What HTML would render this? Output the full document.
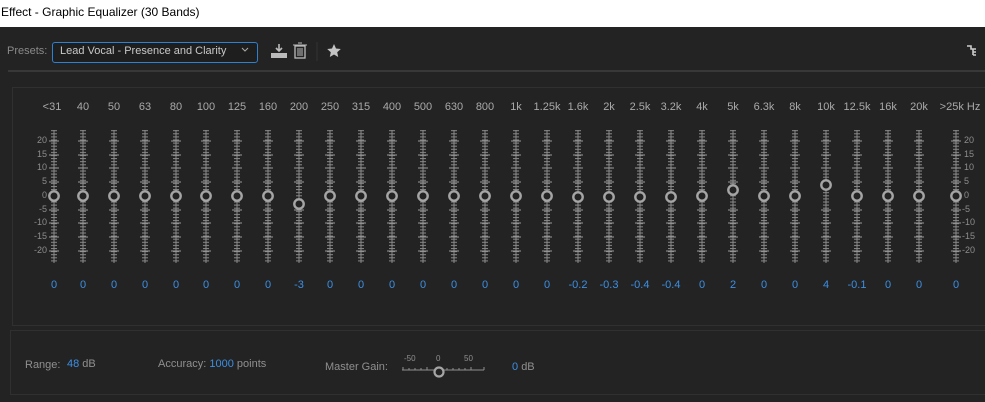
<!DOCTYPE html><html><head><style>
body{margin:0;width:985px;height:402px;background:#232323;position:relative;overflow:hidden;font-family:"Liberation Sans",sans-serif}
.a{position:absolute;white-space:nowrap}
.lb{position:absolute;top:101px;width:44px;text-align:center;font-size:11px;color:#a9a9a9}
.v{position:absolute;top:279px;width:40px;text-align:center;font-size:11px;color:#3d8fe4}
.s{position:absolute;width:30px;text-align:right;font-size:9px;color:#8d8d8d}
.s2{position:absolute;font-size:9px;color:#8d8d8d}
</style></head><body>
<div class="a" style="left:0;top:0;width:985px;height:27px;background:#fff"></div>
<div class="a" style="left:1px;top:5px;font-size:12px;color:#000">Effect - Graphic Equalizer (30 Bands)</div>
<div class="a" style="left:7px;top:45px;font-size:11px;color:#8a8a8a">Presets:</div>
<div class="a" style="left:52px;top:42px;width:204px;height:19px;border:1px solid #2f7fd2;border-radius:3px;background:#1e1e1e"></div>
<div class="a" style="left:60px;top:45px;font-size:11px;color:#c8c8c8">Lead Vocal - Presence and Clarity</div>
<svg class="a" style="left:0;top:30px" width="985" height="40">
<polyline points="242,18 245,21 248,18" fill="none" stroke="#aaa" stroke-width="1"/>
<path d="M279 14v7M276 18l3 3 3-3" stroke="#bbb" stroke-width="1.6" fill="none"/>
<path d="M271 23h16v5h-16z" fill="#bbb"/>
<rect x="295" y="16" width="10" height="12" fill="none" stroke="#bbb" stroke-width="1.3"/>
<path d="M293 15h14M298 13h4M298 18v8M300 18v8M302 18v8" stroke="#bbb" stroke-width="1"/>
<line x1="317" y1="12" x2="317" y2="31" stroke="#333"/>
<path d="M334 14l2 4.5 4.8.5-3.6 3.3 1 4.7-4.2-2.5-4.2 2.5 1-4.7-3.6-3.3 4.8-.5z" fill="#c4c4c4"/>
<path d="M967 16h4v3h2v6M973 19h3M973 22h3M973 25h3" stroke="#ccc" stroke-width="1.6" fill="none"/>
</svg>
<div class="a" style="left:8px;top:70px;width:977px;height:2px;background:#383838"></div>
<div class="a" style="left:12px;top:87px;width:980px;height:237px;border:1px solid #303030"></div>
<div class="a" style="left:10px;top:330px;width:980px;height:63px;border:1px solid #303030"></div>
<svg class="a" style="left:0;top:0" width="985" height="300">
<defs>
<pattern id="p" width="8" height="3.1" patternUnits="userSpaceOnUse"><rect x="0" y="0" width="8" height="1" fill="#8a8a8a"/></pattern>
<symbol id="t" overflow="visible"><rect x="-3" y="130" width="6" height="133" fill="url(#p)"/><rect x="-0.5" y="130" width="1" height="133" fill="#8a8a8a"/>
<path d="M-5 141h10M-5 155h10M-5 168h10M-5 182h10M-5 210h10M-5 223h10M-5 237h10M-5 251h10" stroke="#9a9a9a" stroke-width="1"/></symbol>
</defs>
<g>
<use href="#t" x="54"/><use href="#t" x="83"/><use href="#t" x="114"/><use href="#t" x="145"/><use href="#t" x="176"/><use href="#t" x="206"/><use href="#t" x="237"/><use href="#t" x="268"/><use href="#t" x="299"/><use href="#t" x="330"/><use href="#t" x="361"/><use href="#t" x="392"/><use href="#t" x="423"/><use href="#t" x="454"/><use href="#t" x="485"/><use href="#t" x="516"/><use href="#t" x="547"/><use href="#t" x="578"/><use href="#t" x="609"/><use href="#t" x="640"/><use href="#t" x="671"/><use href="#t" x="702"/><use href="#t" x="733"/><use href="#t" x="764"/><use href="#t" x="795"/><use href="#t" x="826"/><use href="#t" x="857"/><use href="#t" x="888"/><use href="#t" x="919"/><use href="#t" x="956"/>
</g>
<g fill="#232323" stroke="#a5a5a5" stroke-width="2.4">
<circle cx="54" cy="196" r="4.7"/><circle cx="83" cy="196" r="4.7"/><circle cx="114" cy="196" r="4.7"/><circle cx="145" cy="196" r="4.7"/><circle cx="176" cy="196" r="4.7"/><circle cx="206" cy="196" r="4.7"/><circle cx="237" cy="196" r="4.7"/><circle cx="268" cy="196" r="4.7"/><circle cx="299" cy="204" r="4.7"/><circle cx="330" cy="196" r="4.7"/><circle cx="361" cy="196" r="4.7"/><circle cx="392" cy="196" r="4.7"/><circle cx="423" cy="196" r="4.7"/><circle cx="454" cy="196" r="4.7"/><circle cx="485" cy="196" r="4.7"/><circle cx="516" cy="196" r="4.7"/><circle cx="547" cy="196" r="4.7"/><circle cx="578" cy="197" r="4.7"/><circle cx="609" cy="197" r="4.7"/><circle cx="640" cy="197" r="4.7"/><circle cx="671" cy="197" r="4.7"/><circle cx="702" cy="196" r="4.7"/><circle cx="733" cy="190" r="4.7"/><circle cx="764" cy="196" r="4.7"/><circle cx="795" cy="196" r="4.7"/><circle cx="826" cy="185" r="4.7"/><circle cx="857" cy="196" r="4.7"/><circle cx="888" cy="196" r="4.7"/><circle cx="919" cy="196" r="4.7"/><circle cx="956" cy="196" r="4.7"/>
</g>
</svg>
<div class="s" style="left:17px;top:135px">20</div><div class="s" style="left:17px;top:149px">15</div><div class="s" style="left:17px;top:162px">10</div><div class="s" style="left:17px;top:176px">5</div><div class="s" style="left:17px;top:190px">0</div><div class="s" style="left:17px;top:204px">-5</div><div class="s" style="left:17px;top:217px">-10</div><div class="s" style="left:17px;top:231px">-15</div><div class="s" style="left:17px;top:245px">-20</div>
<div class="s2" style="left:964px;top:135px">20</div><div class="s2" style="left:964px;top:149px">15</div><div class="s2" style="left:964px;top:162px">10</div><div class="s2" style="left:964px;top:176px">5</div><div class="s2" style="left:964px;top:190px">0</div><div class="s2" style="left:962px;top:204px">-5</div><div class="s2" style="left:962px;top:217px">-10</div><div class="s2" style="left:962px;top:231px">-15</div><div class="s2" style="left:962px;top:245px">-20</div>
<div class="lb" style="left:30px">&lt;31</div><div class="lb" style="left:61px">40</div><div class="lb" style="left:92px">50</div><div class="lb" style="left:123px">63</div><div class="lb" style="left:154px">80</div><div class="lb" style="left:184px">100</div><div class="lb" style="left:215px">125</div><div class="lb" style="left:246px">160</div><div class="lb" style="left:277px">200</div><div class="lb" style="left:308px">250</div><div class="lb" style="left:339px">315</div><div class="lb" style="left:370px">400</div><div class="lb" style="left:401px">500</div><div class="lb" style="left:432px">630</div><div class="lb" style="left:463px">800</div><div class="lb" style="left:494px">1k</div><div class="lb" style="left:525px">1.25k</div><div class="lb" style="left:556px">1.6k</div><div class="lb" style="left:587px">2k</div><div class="lb" style="left:618px">2.5k</div><div class="lb" style="left:649px">3.2k</div><div class="lb" style="left:680px">4k</div><div class="lb" style="left:711px">5k</div><div class="lb" style="left:742px">6.3k</div><div class="lb" style="left:773px">8k</div><div class="lb" style="left:804px">10k</div><div class="lb" style="left:835px">12.5k</div><div class="lb" style="left:866px">16k</div><div class="lb" style="left:897px">20k</div><div class="lb" style="left:935px;width:50px">&gt;25k Hz</div>
<div class="v" style="left:34px">0</div><div class="v" style="left:63px">0</div><div class="v" style="left:94px">0</div><div class="v" style="left:125px">0</div><div class="v" style="left:156px">0</div><div class="v" style="left:186px">0</div><div class="v" style="left:217px">0</div><div class="v" style="left:248px">0</div><div class="v" style="left:279px">-3</div><div class="v" style="left:310px">0</div><div class="v" style="left:341px">0</div><div class="v" style="left:372px">0</div><div class="v" style="left:403px">0</div><div class="v" style="left:434px">0</div><div class="v" style="left:465px">0</div><div class="v" style="left:496px">0</div><div class="v" style="left:527px">0</div><div class="v" style="left:558px">-0.2</div><div class="v" style="left:589px">-0.3</div><div class="v" style="left:620px">-0.4</div><div class="v" style="left:651px">-0.4</div><div class="v" style="left:682px">0</div><div class="v" style="left:713px">2</div><div class="v" style="left:744px">0</div><div class="v" style="left:775px">0</div><div class="v" style="left:806px">4</div><div class="v" style="left:837px">-0.1</div><div class="v" style="left:868px">0</div><div class="v" style="left:899px">0</div><div class="v" style="left:936px">0</div>
<div class="a" style="left:25px;top:359px;font-size:11px;color:#8f8f8f">Range:</div>
<div class="a" style="left:67px;top:358px;font-size:11px;color:#3d8fe4">48 <span style="color:#8f8f8f">dB</span></div>
<div class="a" style="left:158px;top:358px;font-size:11px;color:#8f8f8f">Accuracy: <span style="color:#3d8fe4">1000</span> points</div>
<div class="a" style="left:325px;top:361px;font-size:11px;color:#8f8f8f">Master Gain:</div>
<div class="a" style="left:404px;top:354px;font-size:8px;color:#8f8f8f">-50</div><div class="a" style="left:436px;top:354px;font-size:8px;color:#8f8f8f">0</div><div class="a" style="left:464px;top:354px;font-size:8px;color:#8f8f8f">50</div>
<svg class="a" style="left:400px;top:362px" width="90" height="16">
<path d="M2 8h82M3 8v-3M9 8v-2M15 8v-2M21 8v-2M27 8v-3M47 8v-2M53 8v-2M59 8v-2M65 8v-2M71 8v-3M84 8v-3" stroke="#8f8f8f" stroke-width="1"/>
<circle cx="39" cy="10" r="4.5" fill="#232323" stroke="#a5a5a5" stroke-width="2.2"/>
</svg>
<div class="a" style="left:512px;top:361px;font-size:11px;color:#3d8fe4">0 <span style="color:#8f8f8f">dB</span></div>
</body></html>
